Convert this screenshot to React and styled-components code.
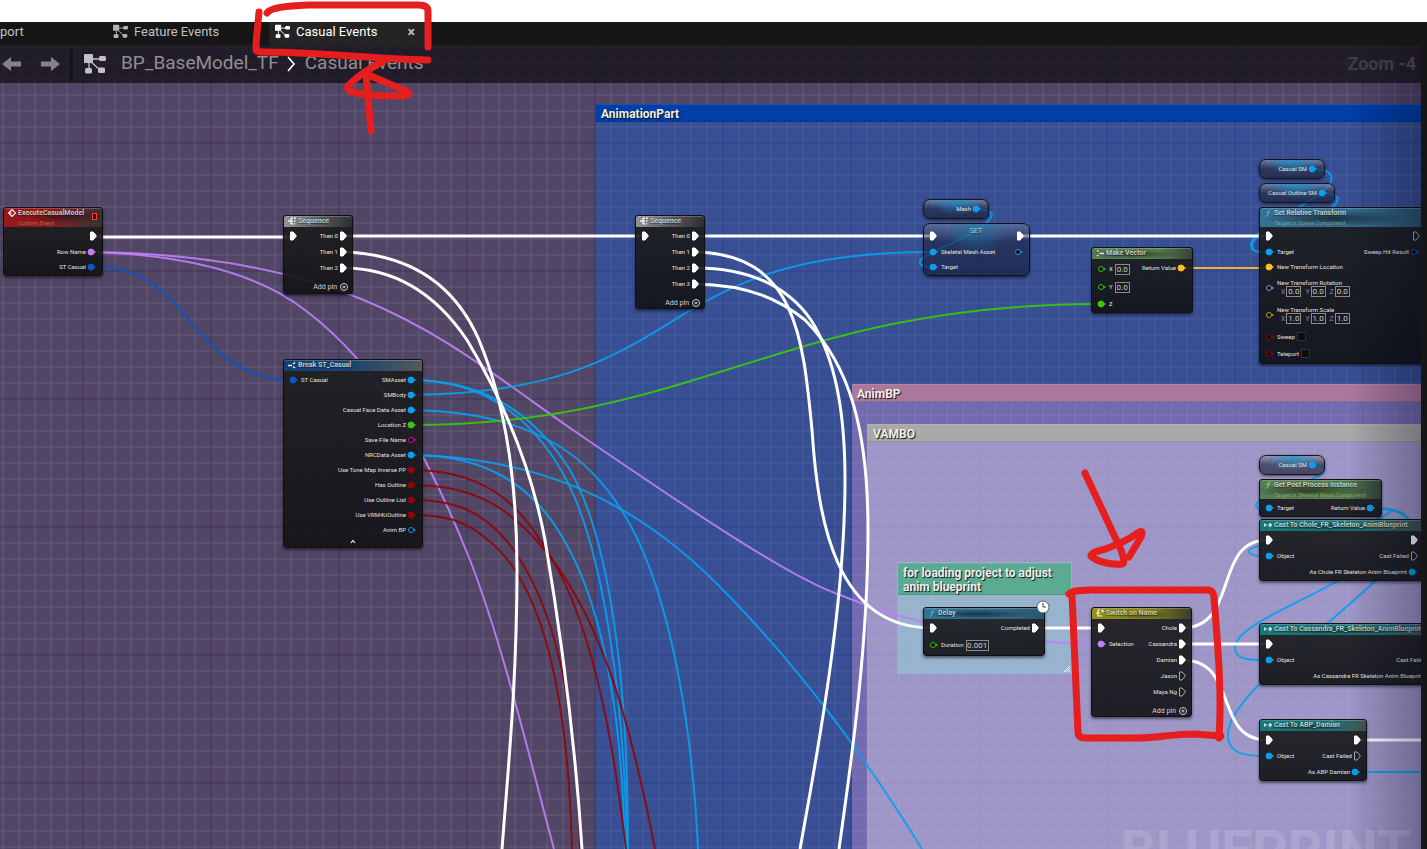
import React from "react";
import styled, { createGlobalStyle, css } from "styled-components";

const GlobalStyle = createGlobalStyle`
  * { box-sizing: border-box; }
  body { margin: 0; background: #fff; font-family: Roboto, "Liberation Sans", sans-serif; }
  button { font: inherit; color: inherit; background: none; border: 0; padding: 0; }
`;

const Page = styled.div`
  position: relative;
  display: flex;
  flex-direction: column;
  min-height: 100vh;
  padding-top: 22px;
  overflow: hidden;
`;

const Editor = styled.div`
  display: flex;
  flex-direction: column;
  flex: 1;
  background: #161616;
  padding-right: 6px;
`;

const TabBar = styled.nav`
  display: flex;
  height: 23px;
`;

const Tab = styled.button`
  display: flex;
  align-items: center;
  gap: 6px;
  width: ${(p) => p.$width}px;
  padding: 0 6px;
  font-size: 13px;
  line-height: 16px;
  padding-bottom: 4px;
  white-space: nowrap;
  color: ${(p) => (p.$active ? "#fff" : "#c0c0c0")};
  background: ${(p) => (p.$active ? "#242424" : "transparent")};
  ${(p) => p.$clipped && css`padding-left: 0;`}
`;

const CloseMark = styled.span`
  margin-left: auto;
  margin-right: 4px;
  font-size: 14px;
  font-weight: 700;
  color: #c0c0c0;
`;

const Canvas = styled.main`
  position: relative;
  flex: 1;
  overflow: hidden;
  background: #514666;
`;

const Grid = styled.div`
  position: absolute;
  inset: 0;
  background-image:
    linear-gradient(90deg, rgba(30, 15, 60, 0.3) 2px, transparent 2px),
    linear-gradient(rgba(30, 15, 60, 0.3) 2px, transparent 2px),
    linear-gradient(90deg, rgba(255, 255, 255, 0.055) 2px, transparent 2px),
    linear-gradient(rgba(255, 255, 255, 0.055) 2px, transparent 2px);
  background-size: 128px 128px, 128px 128px, 16px 16px, 16px 16px;
  background-position: 82px 0, 0 97px, 2px 0, 0 1px;
`;

const Shade = styled.div`
  position: absolute;
  inset: 0 0 0 auto;
  z-index: 5;
  width: 72px;
  background: linear-gradient(90deg, transparent, rgba(0, 0, 20, 0.3));
`;

const PathBar = styled.header`
  position: relative;
  z-index: 6;
  display: flex;
  align-items: center;
  height: 38px;
  padding: 0 5px 0 2px;
  background: rgba(18, 15, 22, 0.75);
  color: #918e94;
  font-size: 19px;
  line-height: 22px;
`;

const NavArrow = styled.button`
  display: flex;
  width: 19px;
  margin-right: 20px;
`;

const Divider = styled.span`
  width: 3px;
  height: 33px;
  margin: 0 11px 0 -10px;
  background: #141318;
`;

const Crumb = styled.button`
  padding-bottom: 2px;
  white-space: nowrap;
`;

const CrumbIcon = styled.span`
  display: flex;
  margin-right: 15px;
`;

const CrumbChevron = styled.span`
  display: flex;
  margin: 0 9px 0 7px;
`;

const ZoomLabel = styled.span`
  margin-left: auto;
  font-size: 18px;
  font-weight: 700;
  color: #3f3c43;
`;

const CommentBox = styled.section`
  position: absolute;
  left: ${(p) => p.$x}px;
  top: ${(p) => p.$y}px;
  ${(p) => (p.$w ? css`width: ${p.$w}px; height: ${p.$h}px;` : css`right: 0; bottom: 0;`)}
  background: ${(p) => p.$body};
  ${(p) => p.$w && css`box-shadow: 0 0 0 1px rgba(190, 225, 220, 0.3);`}
`;

const CommentTitle = styled.h2`
  margin: 0;
  padding: 3px 6px 1px;
  padding-left: ${(p) => (p.$wide ? 6 : 5)}px;
  font-size: 12px;
  line-height: 14px;
  font-weight: 700;
  color: #eee;
  text-shadow: 1px 1px 1px #111;
  background: ${(p) => p.$color};
  box-shadow: inset 0 1px rgba(255, 255, 255, 0.1), inset 0 -1px rgba(0, 0, 0, 0.12);
`;

const ResizeGrip = styled.svg`
  position: absolute;
  right: 1px;
  bottom: 1px;
`;

const Watermark = styled.div`
  position: absolute;
  z-index: 2;
  right: 10px;
  bottom: -32px;
  font-size: 55px;
  line-height: 60px;
  font-weight: 700;
  color: rgba(255, 255, 255, 0.14);
`;

const Wires = styled.svg`
  position: absolute;
  inset: 0;
  z-index: 3;
  width: 100%;
  height: 100%;
  fill: none;
  pointer-events: none;
`;

const NodeBox = styled.article`
  position: absolute;
  z-index: 4;
  left: ${(p) => p.$x}px;
  top: ${(p) => p.$y}px;
  width: ${(p) => p.$w}px;
  height: ${(p) => p.$h}px;
  display: flex;
  flex-direction: column;
  overflow: ${(p) => (p.$badge ? "visible" : "hidden")};
  border: 1px solid #101014;
  border-radius: 3px;
  background: ${(p) =>
    p.$glass
      ? "radial-gradient(ellipse at 50% 0, rgba(20,130,175,.6), transparent 45%), linear-gradient(rgba(130,140,165,.45), rgba(28,34,62,.6) 35%, rgba(22,30,60,.7))"
      : "linear-gradient(rgba(30,31,33,.93), rgba(16,17,20,.9))"};
  box-shadow: 0 2px 3px rgba(0, 0, 0, 0.5);
  ${(p) => p.$glass && css`border-radius: 7px;`}
`;

const NodeHeader = styled.header`
  display: flex;
  align-items: flex-start;
  gap: 2px;
  flex: none;
  height: ${(p) => (p.$tall ? 19 : 11)}px;
  padding: 0 5px 0 4px;
  overflow: hidden;
  border-radius: 2px 2px 0 0;
  background: ${(p) => p.$tone};
  box-shadow: inset 0 1px rgba(255, 255, 255, 0.2);
  ${(p) =>
    p.$plain &&
    css`
      height: 3px;
      padding-top: 2px;
      overflow: visible;
      background: none;
      box-shadow: none;
      justify-content: center;
    `}
`;

const Titles = styled.div`
  flex: ${(p) => (p.$plain ? "none" : 1)};
  white-space: nowrap;
`;

const NodeTitle = styled.h3`
  margin: 0;
  font-size: 7px;
  line-height: 10px;
  font-weight: ${(p) => (p.$plain ? 400 : 700)};
  color: #c4c8c8;
  text-shadow: 0 1px 1px rgba(0, 0, 0, 0.5);
`;

const Subtitle = styled.p`
  margin: 0;
  font-size: 6px;
  line-height: 10px;
  font-style: italic;
  color: ${(p) => p.$color};
`;

const HeaderIcon = styled.svg`
  flex: none;
  width: 8px;
  height: 8px;
  margin-top: 1px;
`;

const EventBadge = styled.span`
  width: 5px;
  height: 7px;
  margin: 5px 0 0;
  border: 1px solid #ff3a30;
  background: #200;
`;

const NodeBody = styled.div`
  display: flex;
  justify-content: space-between;
  padding: 1px 5px 0;
`;

const PinColumn = styled.div`
  display: flex;
  flex-direction: column;
  align-items: ${(p) => (p.$right ? "flex-end" : "flex-start")};
`;

const PinRow = styled.div`
  display: flex;
  flex-direction: ${(p) => (p.$right ? "row-reverse" : "row")};
  align-items: center;
  gap: ${(p) => (p.$right ? 1 : 2)}px;
  height: ${(p) => p.$h}px;
  font-size: 6px;
  line-height: 8px;
  white-space: nowrap;
  color: #e2e2e2;
`;

const PinSvg = styled.svg`
  display: block;
  flex: none;
`;

const AddPin = styled.button`
  display: flex;
  align-items: center;
  gap: 3px;
  align-self: flex-end;
  margin: 6px 4px 0 0;
  font-size: 7px;
  line-height: 10px;
  color: #d4d4d4;
`;

const Expand = styled.button`
  display: flex;
  align-self: center;
  margin-top: 2px;
`;

const Field = styled.input`
  width: ${(p) => p.$w}px;
  height: 11px;
  padding: 0;
  border: 1px solid #8a8a8a;
  border-radius: 0;
  background: transparent;
  color: #cfcfcf;
  font: 8px/9px Roboto, sans-serif;
  text-align: center;
`;

const FieldLabel = styled.label`
  display: flex;
  align-items: center;
  gap: 2px;
`;

const VectorStack = styled.div`
  display: flex;
  flex-direction: column;
`;

const VectorFields = styled.div`
  display: flex;
  gap: 4px;
  height: 10px;
  padding-left: 4px;
  color: #888;
  align-items: center;
  label { gap: 1px; font-size: 7px; }
`;

const Tick = styled.input`
  appearance: none;
  width: 9px;
  height: 9px;
  margin: 0;
  border: 1px solid #333;
  background: #0c0c0c;
`;

const Pill = styled.div`
  position: absolute;
  z-index: 4;
  left: ${(p) => p.$x}px;
  top: ${(p) => p.$y}px;
  width: ${(p) => p.$w}px;
  height: 20px;
  padding: 0 6px;
  border: 1px solid #14161e;
  border-radius: 7px;
  background:
    radial-gradient(ellipse at 50% 0, rgba(20, 150, 205, 0.75), transparent 60%),
    linear-gradient(rgba(150, 155, 170, 0.6), rgba(40, 42, 65, 0.65) 45%, rgba(25, 26, 45, 0.65));
  box-shadow: 0 1px 3px rgba(0, 0, 0, 0.6);
`;

const ClockBadge = styled.svg`
  position: absolute;
  top: -8px;
  right: -6px;
`;

const Markup = styled.svg`
  position: absolute;
  left: 0;
  top: 0;
  z-index: 10;
  width: 100%;
  height: 100%;
  fill: none;
  stroke: #e61e1e;
  stroke-width: 7;
  stroke-linecap: round;
  stroke-linejoin: round;
  pointer-events: none;
`;

const CYAN = "#08a0ee";
const BLUE = "#0a55c8";
const PURPLE = "#c080f8";
const GREEN = "#38c80c";
const RED = "#900408";
const YELLOW = "#fcc020";

const TONES = {
  red: "radial-gradient(ellipse at 60% 45%, rgba(20,15,18,.55), transparent 50%), linear-gradient(100deg, #94181c 40%, #5a2a2c 75%, #333 100%)",
  grey: "linear-gradient(100deg, #969696, #5c5c5e 50%, #2c2d30)",
  navy: "linear-gradient(100deg, #123f74, #1c4470 50%, #55595e)",
  blue: "radial-gradient(ellipse at 45% 55%, rgba(15,30,42,.75), transparent 55%), linear-gradient(90deg, #34708f, #356a8c 60%, #2b566f)",
  green: "radial-gradient(ellipse at 40% 55%, rgba(20,30,20,.65), transparent 55%), linear-gradient(100deg, #577d57, #56804f 65%, #35423a)",
  olive: "radial-gradient(ellipse at 50% 60%, rgba(40,40,15,.5), transparent 45%), linear-gradient(100deg, #929312, #7e7f1e 60%, #3a3b2c)",
  teal: "radial-gradient(ellipse at 45% 60%, rgba(10,30,35,.6), transparent 50%), linear-gradient(100deg, #147878, #1f7476 65%, #475253)",
};

function GraphIcon({ size, color }) {
  return (
    <svg width={size} height={size} viewBox="0 0 22 20" aria-hidden="true">
      <path d="M5 5 L17 5 M5 6 L16 16 M5 6 V16" stroke={color} strokeWidth="1.3" />
      <rect x="0" y="0" width="9" height="9" rx="1" fill={color} />
      <rect x="15" y="2" width="7" height="5" rx="1.5" fill={color} />
      <rect x="1" y="14" width="7" height="5.5" rx="1.5" fill={color} />
      <rect x="14" y="13.5" width="7" height="5.5" rx="1.5" fill={color} />
    </svg>
  );
}

function ArrowIcon({ flip }) {
  return (
    <svg width="19" height="16" viewBox="0 0 19 16" aria-hidden="true">
      <path d="M0 8 L9 1 V5.5 H19 V10.5 H9 V15 Z" fill="#85828a" transform={flip ? "rotate(180 9.5 8)" : undefined} />
    </svg>
  );
}

const ICONS = {
  event: <path d="M4 .5 L7.5 4 L4 7.5 L.5 4 Z M0 4 H4" fill="none" stroke="#eee" strokeWidth="1.2" />,
  sequence: <path d="M0 4 H3 M3 1 V7 M3 1.2 H5 M3 4 H5 M3 6.8 H5 M6 1.2 H8 M6 4 H7.5 M6 6.8 H7" fill="none" stroke="#eee" strokeWidth="1.4" />,
  split: <path d="M0 4.5 H4 M5 3 L7 1.5 M5 5.5 L7 7" fill="none" stroke="#eee" strokeWidth="1.5" />,
  join: <path d="M1 1.5 L2.5 2.5 M1 7 L2.5 6 M3.5 4.5 H8" fill="none" stroke="#eee" strokeWidth="1.5" />,
  fn: <path d="M6.5 1 C4 .5 4.5 3 4 5 C3.5 7 3 7.5 1.5 7 M2.5 3.5 H5.5" fill="none" stroke="#52b0e0" strokeWidth="1" />,
  fnGreen: <path d="M6.5 1 C4 .5 4.5 3 4 5 C3.5 7 3 7.5 1.5 7 M2.5 3.5 H5.5" fill="none" stroke="#86d86a" strokeWidth="1" />,
  switch: <path d="M4 1 H2 V7 H4 M0 4 H4 M5 2 H8 M6.5 .5 V3.5 M4 7 H6" fill="none" stroke="#eee" strokeWidth="1.2" />,
  cast: <path d="M.7 2.5 V5.5 M.7 4 H3 M4 4 H7 M5.5 2.3 L7.5 4 L5.5 5.7" fill="none" stroke="#eee" strokeWidth="1.2" />,
};

function PinIcon({ type, open }) {
  if (type === "exec") {
    return (
      <PinSvg width="8" height="10" aria-hidden="true">
        <path d="M1.5 1 H4 L7 4 V5.5 L4 9 H1.5 Z" fill={open ? "none" : "#fff"} stroke={open ? "#aaa" : "#fff"} strokeWidth="1" />
      </PinSvg>
    );
  }
  return (
    <PinSvg width="10" height="8" aria-hidden="true">
      <circle cx="4" cy="4" r={open ? 2.5 : 3} fill={open ? "#0a0c10" : type} stroke={type} strokeWidth="1" />
      <path d="M7.2 2.5 L9 4 L7.2 5.5 Z" fill={type} />
    </PinSvg>
  );
}

function Pin({ type, label, open, right, h = 15, children }) {
  return (
    <PinRow $right={right} $h={h}>
      <PinIcon type={type} open={open} />
      {label && <span>{label}</span>}
      {children}
    </PinRow>
  );
}

function Node({ x, y, w, h, tone, icon, title, subtitle, subColor, event, glass, left = [], right = [], addPin, expand, clock }) {
  return (
    <NodeBox $x={x} $y={y} $w={w} $h={h} $glass={glass} $badge={clock}>
      <NodeHeader $tall={!!subtitle} $tone={TONES[tone]} $plain={glass}>
        {icon && <HeaderIcon viewBox="0 0 8 8" aria-hidden="true">{ICONS[icon]}</HeaderIcon>}
        <Titles $plain={glass}>
          <NodeTitle $plain={glass}>{title}</NodeTitle>
          {subtitle && <Subtitle $color={subColor}>{subtitle}</Subtitle>}
        </Titles>
        {event && <EventBadge />}
      </NodeHeader>
      <NodeBody>
        <PinColumn>{left.map((p, i) => <Pin key={i} {...p} />)}</PinColumn>
        <PinColumn $right>{right.map((p, i) => <Pin key={i} right {...p} />)}</PinColumn>
      </NodeBody>
      {addPin && (
        <AddPin>
          Add pin
          <svg width="8" height="8" aria-hidden="true">
            <circle cx="4" cy="4" r="3.5" fill="none" stroke="#ccc" />
            <path d="M4 2.5 V5.5 M2.5 4 H5.5" stroke="#ccc" />
          </svg>
        </AddPin>
      )}
      {expand && (
        <Expand aria-label="Collapse">
          <svg width="6" height="5"><path d="M1 4 L3 1.5 L5 4" fill="none" stroke="#eee" strokeWidth="1.2" /></svg>
        </Expand>
      )}
      {clock && (
        <ClockBadge width="14" height="14" aria-hidden="true">
          <circle cx="7" cy="7" r="6" fill="#fff" stroke="#444" strokeWidth="0.8" />
          <path d="M7 3 V7 H10" fill="none" stroke="#444" strokeWidth="1" />
        </ClockBadge>
      )}
    </NodeBox>
  );
}

function Vector({ label, value }) {
  return (
    <VectorStack>
      <span>{label}</span>
      <VectorFields>
        {["X", "Y", "Z"].map((axis) => (
          <FieldLabel key={axis}>
            {axis}
            <Field $w={15} defaultValue={value} />
          </FieldLabel>
        ))}
      </VectorFields>
    </VectorStack>
  );
}

function Variable({ x, y, w, label }) {
  return (
    <Pill $x={x} $y={y} $w={w}>
      <Pin type={CYAN} label={label} right h={18} />
    </Pill>
  );
}

const exec = (label, open) => ({ type: "exec", label, open, h: 16 });
const pin = (type, label, open, h) => ({ type, label, open, h });

const WIRES = [
  [BLUE, 2, "M92 267 C190 262 190 380 292 380"],
  [PURPLE, 2, "M92 252 C190 255 260 275 305 310 C385 370 432 465 470 560 C503 645 530 760 554 849"],
  [PURPLE, 2, "M92 252 C360 255 450 345 570 428 C690 510 790 578 840 595 C910 624 1000 643 1100 644"],
  [CYAN, 2, "M411 380 C500 380 545 430 570 470 C610 540 628 680 628 849"],
  [CYAN, 2, "M411 380 C490 380 540 425 570 487 C600 550 624 680 627 849"],
  [CYAN, 2, "M411 395 C700 392 640 252 932 252"],
  [CYAN, 2, "M411 410 C540 412 600 460 638 540 C675 620 693 740 698 849"],
  [CYAN, 2, "M411 455 C580 458 670 535 730 597 C810 680 870 765 922 849"],
  [CYAN, 2, "M411 455 C480 455 530 480 564 540 C605 610 622 720 625 849"],
  [GREEN, 2, "M411 425 C700 425 780 304 1100 304"],
  [RED, 2, "M411 470 C480 470 515 500 540 540 C590 610 612 730 626 849"],
  [RED, 2, "M411 485 C470 485 505 505 536 540 C600 610 630 720 655 849"],
  [RED, 2, "M411 500 C455 500 480 510 506 540 C555 600 576 700 580 849"],
  [RED, 2, "M411 515 C445 515 465 520 488 540 C545 585 568 700 572 849"],
  [CYAN, 2, "M976 209 C1000 209 995 220 970 234 C940 250 920 256 920 262 C920 267 925 267 933 267"],
  [YELLOW, 2, "M1182 268 H1268"],
  [CYAN, 2, "M1312 169 C1340 169 1335 185 1315 197 C1290 215 1252 230 1251 245 C1251 252 1258 252 1268 252"],
  [CYAN, 2, "M1322 193 C1348 193 1340 208 1310 218 C1280 228 1252 235 1252 245 C1252 252 1258 252 1268 252"],
  [CYAN, 2, "M1312 465 C1332 465 1326 474 1310 480 C1280 492 1256 500 1256 505 C1256 509 1260 509 1268 509"],
  [CYAN, 2, "M1371 508 C1398 508 1396 512 1370 522 C1320 538 1249 543 1249 551 C1249 556 1258 556 1268 556"],
  [CYAN, 2, "M1371 508 C1425 508 1415 530 1370 563 C1300 605 1235 625 1235 648 C1235 660 1250 660 1268 660"],
  [CYAN, 2, "M1371 508 C1430 510 1420 540 1372 584 C1300 650 1228 700 1228 735 C1228 756 1250 756 1268 756"],
  [CYAN, 2, "M1356 772 H1440"],
  ["#fff", 3, "M92 237 H292"],
  ["#fff", 3, "M343 236 H644"],
  ["#fff", 3, "M343 252 C410 254 455 285 479 340 C504 400 517 480 517 570 C517 680 508 770 502 849"],
  ["#fff", 3, "M343 268 C400 268 440 300 467 340 C500 395 530 460 545 540 C562 640 575 740 582 849"],
  ["#fff", 3, "M695 236 H932"],
  ["#fff", 3, "M695 252 C795 254 803 335 812 430 C818 520 835 628 932 628"],
  ["#fff", 3, "M695 268 C755 268 790 290 811 320 C835 358 845 410 845 480 C845 600 820 740 800 849"],
  ["#fff", 3, "M695 284 C750 285 780 300 805 320 C850 365 868 430 868 530 C868 650 850 770 839 849"],
  ["#fff", 3, "M1020 236 H1268"],
  ["#fff", 3, "M1035 628 H1100"],
  ["#fff", 3, "M1182 628 C1240 628 1212 540 1268 540"],
  ["#fff", 3, "M1182 644 H1268"],
  ["#fff", 3, "M1182 660 C1240 660 1212 740 1268 740"],
  ["#fff", 3, "M1356 740 H1440"],
];

export default function App() {
  return (
    <Page>
      <GlobalStyle />
      <Editor>
        <TabBar>
          <Tab $width={107} $clipped>port</Tab>
          <Tab $width={162}><GraphIcon size={15} color="#b4b4b4" />Feature Events</Tab>
          <Tab $width={156} $active>
            <GraphIcon size={15} color="#fff" />Casual Events<CloseMark>×</CloseMark>
          </Tab>
        </TabBar>
        <Canvas>
          <Grid />
          <CommentBox $x={596} $y={59} $body="rgba(0, 103, 255, 0.3)">
            <CommentTitle $color="#003ea8">AnimationPart</CommentTitle>
          </CommentBox>
          <CommentBox $x={852} $y={339} $body="rgba(253, 173, 240, 0.3)">
            <CommentTitle $color="#ab789d">AnimBP</CommentTitle>
          </CommentBox>
          <CommentBox $x={867} $y={379} $body="rgba(220, 215, 235, 0.4)">
            <CommentTitle $wide $color="#a9a9a9">VAMBO</CommentTitle>
          </CommentBox>
          <CommentBox $x={898} $y={518} $w={173} $h={110} $body="rgba(140, 234, 217, 0.35)">
            <CommentTitle $color="#5bab92">for loading project to adjust anim blueprint</CommentTitle>
            <ResizeGrip width="7" height="7" aria-hidden="true">
              <path d="M1 7 L7 1 M3.5 7 L7 3.5 M6 7 L7 6" stroke="#fff" />
            </ResizeGrip>
          </CommentBox>
          <Watermark>BLUEPRINT</Watermark>

          <Wires aria-hidden="true">
            <g transform="translate(0 -45)">
              {WIRES.map(([color, width, d]) => (
                <path key={d + color} d={d} stroke={color} strokeWidth={width} strokeOpacity={width === 3 ? 1 : 0.9} />
              ))}
            </g>
          </Wires>

          <Node x={3} y={162} w={100} h={69} tone="red" icon="event" title="ExecuteCasualModel"
            subtitle="Custom Event" subColor="#b06a55" event
            right={[exec(), pin(PURPLE, "Row Name"), pin(BLUE, "ST Casual")]} />
          <Node x={283} y={170} w={70} h={79} tone="grey" icon="sequence" title="Sequence" addPin
            left={[exec()]} right={[exec("Then 0"), exec("Then 1"), exec("Then 2")]} />
          <Node x={283} y={314} w={140} h={189} tone="navy" icon="split" title="Break ST_Casual" expand
            left={[pin(BLUE, "ST Casual")]}
            right={[
              pin(CYAN, "SMAsset"), pin(CYAN, "SMBody"), pin(CYAN, "Casual Face Data Asset"),
              pin(GREEN, "Location Z"), pin("#d010a8", "Save File Name", true), pin(CYAN, "NRCData Asset"),
              pin(RED, "Use Tone Map Inverse PP"), pin(RED, "Has Outline"), pin(RED, "Use Outline List"),
              pin(RED, "Use VRM4UOutline"), pin(CYAN, "Anim BP", true),
            ]} />
          <Node x={635} y={170} w={70} h={94} tone="grey" icon="sequence" title="Sequence" addPin
            left={[exec()]} right={[exec("Then 0"), exec("Then 1"), exec("Then 2"), exec("Then 3")]} />
          <Variable x={923} y={154} w={66} label="Mesh" />
          <Node x={923} y={178} w={107} h={53} glass title="SET"
            left={[exec(), pin(CYAN, "Skeletal Mesh Asset"), pin(CYAN, "Target")]}
            right={[exec(), pin(CYAN, null, true)]} />
          <Node x={1091} y={202} w={102} h={66} tone="green" icon="join" title="Make Vector"
            left={[
              { ...pin(GREEN, null, true, 18), children: <FieldLabel>X<Field $w={15} defaultValue="0.0" /></FieldLabel> },
              { ...pin(GREEN, null, true, 18), children: <FieldLabel>Y<Field $w={15} defaultValue="0.0" /></FieldLabel> },
              pin(GREEN, "Z", false, 16),
            ]}
            right={[pin(YELLOW, "Return Value", false, 16)]} />

          <Variable x={1259} y={114} w={66} label="Casual SM" />
          <Variable x={1259} y={138} w={76} label="Casual Outline SM" />
          <Node x={1259} y={162} w={167} h={157} tone="blue" icon="fn" title="Set Relative Transform"
            subtitle="Target is Scene Component" subColor="#7f9c8c"
            left={[
              exec(), pin(CYAN, "Target"), pin(YELLOW, "New Transform Location"),
              { ...pin("#8c96e0", null, true, 27), children: <Vector label="New Transform Rotation" value="0.0" /> },
              { ...pin("#c89a1c", null, true, 27), children: <Vector label="New Transform Scale" value="1.0" /> },
              { ...pin(RED, null, true, 17), children: <FieldLabel>Sweep<Tick type="checkbox" /></FieldLabel> },
              { ...pin(RED, null, true, 17), children: <FieldLabel>Teleport<Tick type="checkbox" /></FieldLabel> },
            ]}
            right={[exec(null, true), pin(BLUE, "Sweep Hit Result", true)]} />

          <Node x={923} y={562} w={122} h={49} tone="blue" icon="fn" title="Delay" clock
            left={[
              exec(),
              { ...pin(GREEN, null, true, 18), children: <FieldLabel>Duration<Field $w={23} defaultValue="0.001" /></FieldLabel> },
            ]}
            right={[exec("Completed")]} />
          <Node x={1091} y={562} w={101} h={110} tone="olive" icon="switch" title="Switch on Name" addPin
            left={[exec(), pin(PURPLE, "Selection", false, 16)]}
            right={[exec("Chole"), exec("Cassandra"), exec("Damian"), exec("Jason", true), exec("Maya Ng", true)]} />

          <Variable x={1259} y={410} w={66} label="Casual SM" />
          <Node x={1259} y={434} w={123} h={38} tone="green" icon="fnGreen" title="Get Post Process Instance"
            subtitle="Target is Skeletal Mesh Component" subColor="#8fa25c"
            left={[pin(CYAN, "Target", false, 16)]} right={[pin(CYAN, "Return Value", false, 16)]} />
          <Node x={1259} y={474} w={165} h={62} tone="teal" icon="cast" title="Cast To Chole_FR_Skeleton_AnimBlueprint"
            left={[exec(), pin(CYAN, "Object", false, 16)]}
            right={[exec(), exec("Cast Failed", true), pin(CYAN, "As Chole FR Skeleton Anim Blueprint", false, 16)]} />
          <Node x={1259} y={578} w={182} h={62} tone="teal" icon="cast" title="Cast To Cassandra_FR_Skeleton_AnimBlueprint"
            left={[exec(), pin(CYAN, "Object", false, 16)]}
            right={[exec(), exec("Cast Failed", true), pin(CYAN, "As Cassandra FR Skeleton Anim Blueprint", false, 16)]} />
          <Node x={1259} y={674} w={108} h={62} tone="teal" icon="cast" title="Cast To ABP_Damian"
            left={[exec(), pin(CYAN, "Object", false, 16)]}
            right={[exec(), exec("Cast Failed", true), pin(CYAN, "As ABP Damian", false, 16)]} />

          <Shade />
          <PathBar>
            <NavArrow aria-label="Back"><ArrowIcon /></NavArrow>
            <NavArrow aria-label="Forward"><ArrowIcon flip /></NavArrow>
            <Divider />
            <CrumbIcon><GraphIcon size={22} color="#c2c0c4" /></CrumbIcon>
            <Crumb>BP_BaseModel_TF</Crumb>
            <CrumbChevron>
              <svg width="10" height="16" aria-hidden="true"><path d="M2 1 L8 8 L2 15" fill="none" stroke="#fff" strokeWidth="1.6" /></svg>
            </CrumbChevron>
            <Crumb>Casual Events</Crumb>
            <ZoomLabel>Zoom -4</ZoomLabel>
          </PathBar>
        </Canvas>
      </Editor>

      <Markup aria-hidden="true">
        <path d="M267 13 C270 8 285 6 308 5 H418 Q428 5 428 11 V47" />
        <path d="M259 12 C258 25 256 38 256 49 Q256 52 262 52 C320 52 370 59 428 60" />
        <path d="M371 131 L366 74 L406 91 Q414 95 400 96 C380 96 362 96 350 91 Q345 88 350 84 C360 74 370 68 384 61" />
        <path d="M1085 473 L1121 550 Q1126 564 1122 564 C1112 565 1098 562 1092 557 Q1089 555 1095 552 C1112 548 1130 539 1139 532 Q1144 530 1141 537 L1129 557" />
        <path d="M1069 594 C1073 590 1080 591 1090 590 H1208 Q1213 590 1214 597 C1218 650 1222 690 1219 738" />
        <path d="M1072 595 L1078 732 Q1078 738 1086 738 H1135 C1160 738 1170 734 1195 734 L1221 736" />
      </Markup>
    </Page>
  );
}
